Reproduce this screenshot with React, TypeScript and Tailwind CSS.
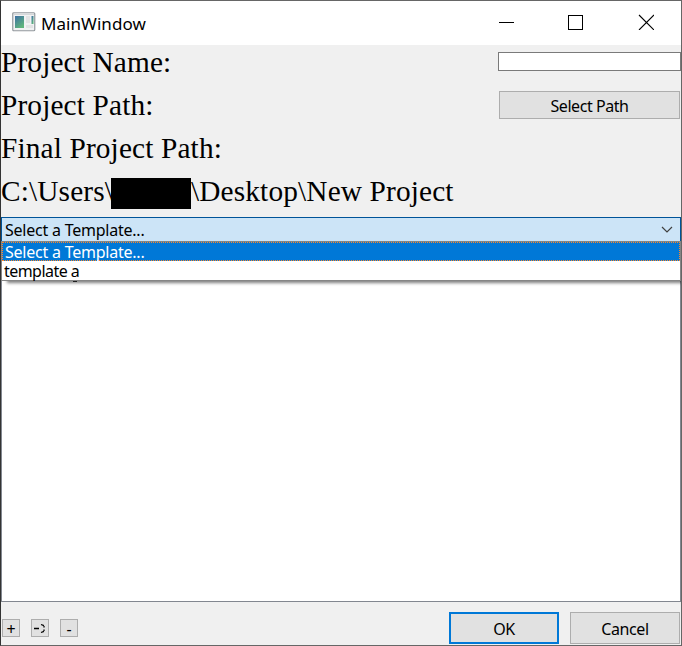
import type { ReactNode } from 'react';

const sans = "font-['Noto_Sans','Open_Sans',sans-serif]";

function WindowIcon() {
  return (
    <svg width="24" height="20" viewBox="0 0 24 20" className="shrink-0">
      <defs>
        <linearGradient id="pane" x1="0" y1="0" x2="0.6" y2="1">
          <stop offset="0" stopColor="#3d6fa5" />
          <stop offset="1" stopColor="#5fb57c" />
        </linearGradient>
      </defs>
      <rect x="0.75" y="0.75" width="22" height="18" rx="1" fill="#f1f2f3" stroke="#92989d" strokeWidth="1.2" />
      <path d="M2 2.5h20" stroke="#d5d8da" />
      <rect x="3" y="4" width="9" height="12" fill="url(#pane)" />
      <rect x="14" y="4" width="4" height="7" fill="#e2e3e4" />
      <rect x="19.5" y="4" width="2" height="8" fill="url(#pane)" />
      <rect x="14" y="13" width="7" height="3" fill="#e2e3e4" />
    </svg>
  );
}

function TitleBar() {
  return (
    <header className="flex h-11 shrink-0 items-start bg-white pl-[11px]">
      <div className="pt-[11px]">
        <WindowIcon />
      </div>
      <h1 className="ml-[5px] mt-[11px] text-[17px] leading-6 tracking-[0.05px]">MainWindow</h1>
      <svg width="156" height="16" viewBox="0 0 156 16" className="ml-auto mr-[27px] mt-[13px]" fill="none" stroke="#000" shapeRendering="crispEdges">
        <path d="M1 8.5h15" />
        <rect x="70.5" y="1.5" width="14" height="14" />
        <path d="M141 1l15 15M156 1l-15 15" shapeRendering="auto" strokeWidth="1.1" />
      </svg>
    </header>
  );
}

function FormRow({ label, children }: { label: ReactNode; children?: ReactNode }) {
  return (
    <div className="flex h-[43px] items-start justify-between">
      <div className="flex whitespace-pre font-['Liberation_Serif',serif] text-[29.33px] leading-[34px] tracking-[0.14px]">{label}</div>
      {children}
    </div>
  );
}

function TinyButton({ children }: { children: ReactNode }) {
  return (
    <button className="flex h-[18px] w-[18px] items-center justify-center border border-[#adadad] bg-[#e1e1e1] pt-[2px] text-[16px] leading-[14px]">
      {children}
    </button>
  );
}

export default function App() {
  return (
    <div className={`${sans} flex h-[646px] w-[682px] flex-col overflow-hidden border border-[#666666] border-l-[#333333] bg-[#f0f0f0] text-black`}>
      <TitleBar />
      <main className="flex min-h-0 flex-1 flex-col">
        <section className="h-[172px] shrink-0">
          <FormRow label="Project Name:">
            <input className="mt-[7px] h-[19px] w-[183px] border border-[#7a7a7a] bg-white outline-none" />
          </FormRow>
          <FormRow label="Project Path:">
            <button className="mr-px mt-[3px] h-7 w-[181px] border border-[#adadad] bg-[#e1e1e1] pt-[2px] text-[16px] leading-[24px] tracking-[-0.45px]">
              Select Path
            </button>
          </FormRow>
          <FormRow label="Final Project Path:" />
          <FormRow
            label={
              <>
                <span className="w-[110px]">C:\Users\</span>
                <span className="mt-[4px] h-[31px] w-20 bg-black" />
                <span>\Desktop\New Project</span>
              </>
            }
          />
        </section>
        <div className="flex h-6 shrink-0 items-center justify-between border border-b-0 border-[#005499] bg-[#cce4f7] pl-[3px] pr-[7px] text-[16px] leading-6 tracking-[-0.23px]">
          <span>Select a Template...</span>
          <svg width="12" height="7" viewBox="0 0 12 7" fill="none" stroke="#404040" strokeWidth="1.2">
            <path d="M1 1l5 5 5-5" />
          </svg>
        </div>
        <div className="z-10 h-10 shrink-0 border border-[#858585] bg-white text-[16px] shadow-[5px_3px_3px_-1px_rgba(0,0,0,0.5)]">
          <div className="h-[19px] border border-dotted border-[#ff8728] bg-[#0078d7] pl-[2px] leading-[18px] tracking-[-0.23px] text-white">Select a Template...</div>
          <div className="h-[19px] pl-[2px] leading-[20px] tracking-[-0.55px]">template a</div>
        </div>
        <div className="h-[321px] shrink-0 border border-t-0 border-[#828790] bg-white">
          <div className="relative z-20 ml-[71px] h-px w-[4px] bg-[#202020]" />
        </div>
        <footer className="flex flex-1 items-start justify-between pl-px pr-px pt-[10px]">
          <div className="flex gap-[11px] pt-[7px]">
            <TinyButton>+</TinyButton>
            <TinyButton>
              <svg width="14" height="12" viewBox="0 0 14 12" fill="none" stroke="#000" strokeWidth="1.3">
                <path d="M1 5.5h5M8 1.5l3 1.2M11 3v1.5M11 6.5v1.5M11 8.3l-3 1.2" />
              </svg>
            </TinyButton>
            <TinyButton>-</TinyButton>
          </div>
          <div className="flex gap-[11px] text-[16px] tracking-[-0.4px]">
            <button className="h-8 w-[110px] border-2 border-[#0078d7] bg-[#e1e1e1] pt-[2px]">OK</button>
            <button className="h-8 w-[110px] border border-[#adadad] bg-[#e1e1e1] pt-[2px]">Cancel</button>
          </div>
        </footer>
      </main>
    </div>
  );
}
